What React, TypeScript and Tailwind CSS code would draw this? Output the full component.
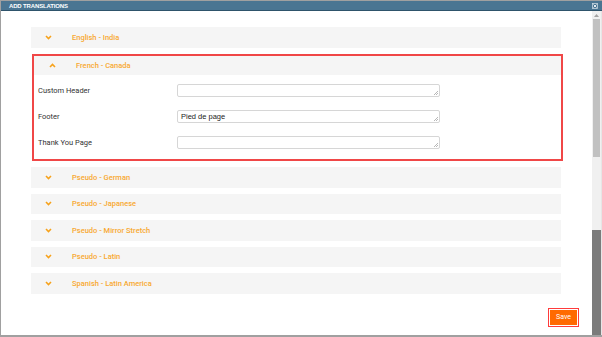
import React from "react";

const languages = [
  "Pseudo - German",
  "Pseudo - Japanese",
  "Pseudo - Mirror Stretch",
  "Pseudo - Latin",
  "Spanish - Latin America",
];

const fields = [
  { label: "Custom Header", value: "" },
  { label: "Footer", value: "Pied de page" },
  { label: "Thank You Page", value: "" },
];

const Chevron = ({ up = false }: { up?: boolean }) => (
  <svg width="7" height="5" viewBox="0 0 7 5" className="shrink-0">
    <polyline
      points={up ? "1,4 3.5,1.5 6,4" : "1,1 3.5,3.5 6,1"}
      fill="none"
      stroke="#f7a21b"
      strokeWidth="1.6"
    />
  </svg>
);

const Row = ({ title }: { title: string }) => (
  <div className="flex h-[20.5px] w-[530px] items-center bg-[#f5f5f5] pl-[14px]">
    <Chevron />
    <span className="ml-[20px] text-[7.5px] font-medium text-[#f8a932]">{title}</span>
  </div>
);

// small textarea with the grab handle in its corner
const Field = ({ value }: { value: string }) => (
  <div className="relative h-[13px] w-[263px] rounded-[2px] border border-[#d6d6d6] bg-white pl-[3px] text-[7.5px] leading-[11px] text-[#222]" style={{ fontFamily: '"Liberation Sans", Arial, sans-serif' }}>
    {value}
    <svg width="5" height="5" viewBox="0 0 5 5" className="absolute bottom-[1px] right-[1px]">
      <line x1="1" y1="5" x2="5" y2="1" stroke="#9a9a9a" strokeWidth="0.7" />
      <line x1="3" y1="5" x2="5" y2="3" stroke="#9a9a9a" strokeWidth="0.7" />
    </svg>
  </div>
);

export default function App() {
  return (
    <div
      className="flex h-[337px] w-[602px] flex-col overflow-hidden border-t border-b-2 border-l border-[#a0a0a0] bg-white"
      style={{ fontFamily: "Roboto, 'Noto Sans', sans-serif" }}
    >
      {/* title bar */}
      <div className="flex h-[10px] shrink-0 items-center justify-between border-b border-[#2e536b] bg-[#4a7592] pl-[8px] pr-[4px]">
        <span className="text-[6px] font-bold leading-none tracking-tight text-white" style={{ fontFamily: '"Liberation Sans", Arial, sans-serif' }}>
          ADD TRANSLATIONS
        </span>
        <svg width="6" height="6" viewBox="0 0 6 6">
          <rect x="0.5" y="0.5" width="5" height="5" fill="none" stroke="#c9d6df" strokeWidth="0.8" />
          <path d="M1.5 1.5 L4.5 4.5 M4.5 1.5 L1.5 4.5" stroke="#e6edf2" strokeWidth="1" />
        </svg>
      </div>

      <div className="flex min-h-0 flex-1">
        <div className="flex flex-1 flex-col pl-[30px] pt-[16px]">
          <div className="flex flex-col gap-[6px]">
            <Row title="English - India" />

            {/* expanded item */}
            <div className="ml-[1px] w-[531px] border-2 border-[#f04747]">
              <div className="flex h-[19.5px] w-[527px] items-center bg-[#f5f5f5] pl-[15px]">
                <Chevron up />
                <span className="ml-[20px] text-[7.5px] font-medium text-[#f8a932]">French - Canada</span>
              </div>
              <div className="flex flex-col gap-[13px] pb-[10px] pl-[4px] pt-[9px]">
                {fields.map((f) => (
                  <div key={f.label} className="flex items-center">
                    <span className="w-[139px] text-[7.5px] text-[#333]">{f.label}</span>
                    <Field value={f.value} />
                  </div>
                ))}
              </div>
            </div>

            {languages.map((l) => (
              <Row key={l} title={l} />
            ))}
          </div>

          <div className="mt-[14px] flex w-[548px] justify-end">
            <button className="h-[19px] w-[31px] border border-[#ff3b3b] p-[1px]">
              <span className="flex h-full w-full items-center justify-center bg-[#ff6a00] text-[7px] text-white">
                Save
              </span>
            </button>
          </div>
        </div>

        {/* scrollbar */}
        <div className="flex w-[9px] flex-col bg-[#f0f0f0]">
          <div className="flex h-[8px] items-center justify-center">
            <svg width="5" height="3" viewBox="0 0 5 3">
              <polygon points="0,3 2.5,0 5,3" fill="#a3a3a3" />
            </svg>
          </div>
          <div className="mx-[1px] h-[138px] bg-[#c1c1c1]" />
          <div className="h-[73px]" />
          <div className="flex-1 bg-[#7b7b7b]" />
        </div>
        <div className="w-[1px] bg-[#e6e6e6]" />
      </div>
    </div>
  );
}
